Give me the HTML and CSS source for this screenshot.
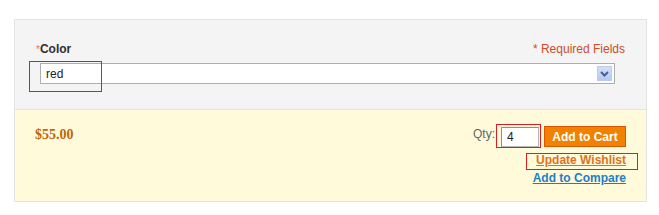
FILE: index.html
```html
<!DOCTYPE html>
<html lang="en">
<head>
    <meta charset="UTF-8">
    <title>Product options</title>
    <link rel="stylesheet" href="styles.css">
</head>
<body>
    <div class="page">
        <!-- Options (grey block) -->
        <div class="product-options">
            <div class="options-head">
                <label class="opt-label"><em>*</em>Color</label>
                <p class="required-note">* Required Fields</p>
            </div>
            <div class="input-box">
                <select class="opt-select">
                    <option>red</option>
                </select>
                <span class="select-arrow">
                    <svg width="9" height="6" viewBox="0 0 9 6"><path d="M1 1 L4.5 4.5 L8 1" fill="none" stroke="#4a5f8c" stroke-width="2"/></svg>
                </span>
                <span class="mark mark-select"></span>
            </div>
        </div>

        <!-- Price + cart (yellow block) -->
        <div class="product-options-bottom">
            <div class="price">$55.00</div>
            <div class="add-to-box">
                <div class="add-to-cart">
                    <label class="qty-label">Qty:</label>
                    <span class="qty-wrap">
                        <input class="qty" type="text" value="4">
                        <span class="mark mark-qty"></span>
                    </span>
                    <button class="btn-cart" type="button">Add to Cart</button>
                </div>
                <ul class="add-to-links">
                    <li><a href="#" class="link-wishlist">Update Wishlist<span class="mark mark-wishlist"></span></a></li>
                    <li><a href="#" class="link-compare">Add to Compare</a></li>
                </ul>
            </div>
        </div>
    </div>
</body>
</html>
```

FILE: styles.css
```css
/* Base */
body, html {
    margin: 0;
    padding: 0;
    background: #fff;
    font-family: "Liberation Sans", Arial, sans-serif;
    font-size: 12px;
    color: #333;
}

.page {
    padding: 19px 12px 0 14px;
}

/* Grey options block */
.product-options {
    background: #f4f4f4;
    border: 1px solid #e4e4e4;
    border-bottom: 0;
    padding: 22px 21px 25px 21px;
}

.options-head {
    display: flex;
    justify-content: space-between;
    line-height: 15px;
}

.opt-label {
    font-weight: bold;
    color: #2f2f2f;
}

.opt-label em {
    font-style: normal;
    font-weight: normal;
    color: #e0705a;
    font-size: 10px;
}

.required-note {
    margin: 0;
    color: #cf4b2b;
}

.input-box {
    position: relative;
    margin: 6px 10px 0 4px;
}

.opt-select {
    display: block;
    width: 100%;
    height: 21px;
    margin: 0;
    padding: 0 0 0 5px;
    border: 1px solid #aeaeae;
    background: #fff;
    font-family: inherit;
    font-size: 12px;
    color: #222;
    appearance: none;
    -webkit-appearance: none;
    border-radius: 0;
}

.select-arrow {
    position: absolute;
    top: 3px;
    right: 3px;
    width: 15px;
    height: 15px;
    box-sizing: border-box;
    border: 1px solid #b9cbf3;
    background: linear-gradient(#d3def9, #b6c9f4);
    display: flex;
    align-items: center;
    justify-content: center;
}

/* Red annotation boxes */
.mark {
    position: absolute;
    box-sizing: border-box;
    border: 1px solid #e01b22;
}

.mark-select {
    left: -11px;
    top: -2px;
    width: 73px;
    height: 31px;
}

/* Yellow bottom block */
.product-options-bottom {
    display: flex;
    justify-content: space-between;
    background: #fffada;
    border: 1px solid #e4e4e4;
    padding: 16px 20px 14px 20px;
}

.price {
    font-family: "Liberation Serif", "Times New Roman", serif;
    font-weight: bold;
    font-size: 14px;
    line-height: 16px;
    color: #c06608;
    padding-top: 1px;
}

.add-to-box {
    display: flex;
    flex-direction: column;
    align-items: flex-end;
}

.add-to-cart {
    display: flex;
    align-items: flex-start;
}

.qty-label {
    color: #666;
    line-height: 15px;
    margin-top: 1px;
}

.qty-wrap {
    position: relative;
    margin: 1px 5px 0 6px;
}

.qty {
    display: block;
    width: 38px;
    height: 20px;
    box-sizing: border-box;
    margin: 0;
    padding: 0 5px;
    border: 1px solid #b6b6b6;
    border-top-color: #8f8f8f;
    border-left-color: #8f8f8f;
    background: #fff;
    font-family: inherit;
    font-size: 12px;
    color: #222;
}

.mark-qty {
    left: -5px;
    top: -3px;
    width: 45px;
    height: 24px;
}

.btn-cart {
    height: 21px;
    margin: 0;
    padding: 0 7px;
    border: 1px solid #de5400;
    background: #f18200;
    color: #fff;
    font-family: inherit;
    font-size: 12px;
    font-weight: bold;
    width: 82px;
}

.add-to-links {
    list-style: none;
    margin: 4px 0 0 0;
    padding: 0;
    text-align: right;
    line-height: 18px;
}

.add-to-links a {
    font-weight: bold;
    text-decoration: underline;
}

.link-wishlist {
    position: relative;
    display: inline-block;
    color: #dc7324;
}

.mark-wishlist {
    left: -10px;
    right: -12px;
    top: 2px;
    bottom: -1px;
}

.link-compare {
    color: #1e7ec8;
}
```
